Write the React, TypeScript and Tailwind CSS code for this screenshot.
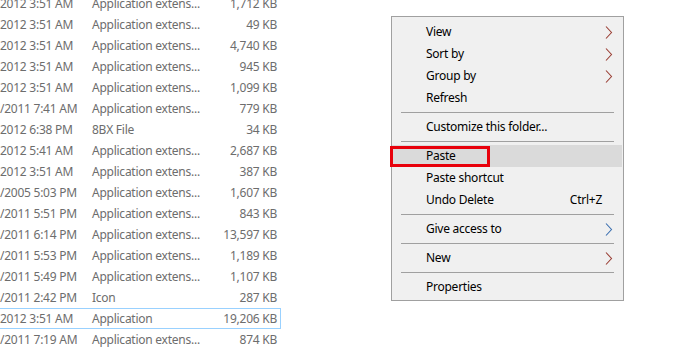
import React from "react";

const rows = [
  { date: "2012 3:51 AM", type: "Application extens...", size: "1,712 KB" },
  { date: "2012 3:51 AM", type: "Application extens...", size: "49 KB" },
  { date: "2012 3:51 AM", type: "Application extens...", size: "4,740 KB" },
  { date: "2012 3:51 AM", type: "Application extens...", size: "945 KB" },
  { date: "2012 3:51 AM", type: "Application extens...", size: "1,099 KB" },
  { date: "/2011 7:41 AM", type: "Application extens...", size: "779 KB" },
  { date: "2012 6:38 PM", type: "8BX File", size: "34 KB" },
  { date: "2012 5:41 AM", type: "Application extens...", size: "2,687 KB" },
  { date: "2012 3:51 AM", type: "Application extens...", size: "387 KB" },
  { date: "/2005 5:03 PM", type: "Application extens...", size: "1,607 KB" },
  { date: "/2011 5:51 PM", type: "Application extens...", size: "843 KB" },
  { date: "/2011 6:14 PM", type: "Application extens...", size: "13,597 KB" },
  { date: "/2011 5:53 PM", type: "Application extens...", size: "1,189 KB" },
  { date: "/2011 5:49 PM", type: "Application extens...", size: "1,107 KB" },
  { date: "/2011 2:42 PM", type: "Icon", size: "287 KB" },
  { date: "2012 3:51 AM", type: "Application", size: "19,206 KB", focused: true },
  { date: "/2011 7:19 AM", type: "Application extens...", size: "874 KB" },
];

type MenuEntry =
  | { sep: true }
  | { label: string; sub?: boolean; shortcut?: string; active?: boolean; blue?: boolean };

const menu: MenuEntry[] = [
  { label: "View", sub: true },
  { label: "Sort by", sub: true },
  { label: "Group by", sub: true },
  { label: "Refresh" },
  { sep: true },
  { label: "Customize this folder..." },
  { sep: true },
  { label: "Paste", active: true },
  { label: "Paste shortcut" },
  { label: "Undo Delete", shortcut: "Ctrl+Z" },
  { sep: true },
  { label: "Give access to", sub: true, blue: true },
  { sep: true },
  { label: "New", sub: true },
  { sep: true },
  { label: "Properties" },
];

function Chevron({ blue }: { blue?: boolean }) {
  return (
    <svg width="8" height="13" viewBox="0 0 8 13" className="shrink-0">
      <path
        d="M1 0.5 L6.5 6.5 L1 12.5"
        fill="none"
        stroke={blue ? "#3b6fb0" : "#9a3f35"}
        strokeWidth="1.1"
      />
    </svg>
  );
}

export default function App() {
  return (
    <div
      className="relative h-[351px] w-[700px] overflow-hidden bg-white text-[12px] tracking-[-0.25px]"
      style={{ fontFamily: '"Noto Sans", "Open Sans", sans-serif' }}
    >
      <div className="mt-[-7px] flex w-[281px] flex-col text-[#6d6d6d]">
        {rows.map((r, i) => (
          <div
            key={i}
            className={`ml-[-2px] flex h-[21px] shrink-0 items-center border ${
              r.focused ? "border-[#99d1ff]" : "border-transparent"
            }`}
          >
            <span className="w-[93px] shrink-0 whitespace-nowrap pl-[1px]">{r.date}</span>
            <span className="w-[120px] shrink-0 whitespace-nowrap">{r.type}</span>
            <span className="flex-1 whitespace-nowrap pr-[3px] text-right">{r.size}</span>
          </div>
        ))}
      </div>

      <div className="absolute left-[391px] top-[16px] w-[233px] border border-[#a0a0a0] bg-[#f0f0f0] pb-[2px] pr-[1px] pt-[4px] text-black">
        {menu.map((m, i) =>
          "sep" in m ? (
            <div key={i} className="py-[3px] pl-[9px] pr-[8px]">
              <div className="h-px bg-[#a0a0a0]" />
            </div>
          ) : (
            <div
              key={i}
              className={`relative flex h-[22px] items-center pl-[34px] pr-[9px] ${
                m.active ? "bg-[#dadada]" : ""
              }`}
            >
              <span className="flex-1 whitespace-nowrap">{m.label}</span>
              {m.shortcut && <span className="mr-[11px] whitespace-nowrap">{m.shortcut}</span>}
              {m.sub && <Chevron blue={m.blue} />}
              {m.active && (
                <div className="absolute left-[-2px] top-[1px] h-[21px] w-[100px] border-[3px] border-[#e8000b]" />
              )}
            </div>
          )
        )}
      </div>
    </div>
  );
}
